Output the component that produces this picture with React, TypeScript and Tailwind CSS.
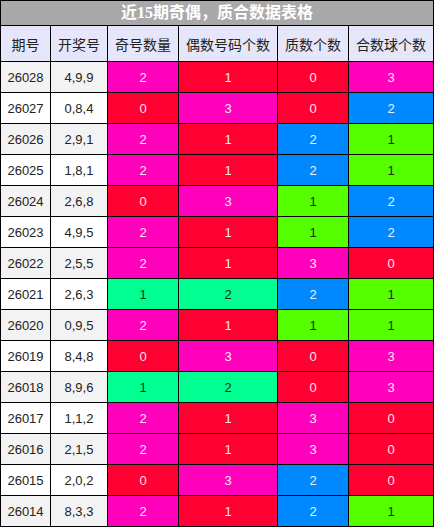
import React from "react";

type Row = [string, string, number, number, number, number];

const rows: Row[] = [
  ["26028", "4,9,9", 2, 1, 0, 3],
  ["26027", "0,8,4", 0, 3, 0, 2],
  ["26026", "2,9,1", 2, 1, 2, 1],
  ["26025", "1,8,1", 2, 1, 2, 1],
  ["26024", "2,6,8", 0, 3, 1, 2],
  ["26023", "4,9,5", 2, 1, 1, 2],
  ["26022", "2,5,5", 2, 1, 3, 0],
  ["26021", "2,6,3", 1, 2, 2, 1],
  ["26020", "0,9,5", 2, 1, 1, 1],
  ["26019", "8,4,8", 0, 3, 0, 3],
  ["26018", "8,9,6", 1, 2, 0, 3],
  ["26017", "1,1,2", 2, 1, 3, 0],
  ["26016", "2,1,5", 2, 1, 3, 0],
  ["26015", "2,0,2", 0, 3, 2, 0],
  ["26014", "8,3,3", 2, 1, 2, 1],
];

const MAG = "bg-[#ff00bb] text-[#fde8f6]";
const RED = "bg-[#ff0033] text-[#fde3e8]";
const BLUE = "bg-[#0088ff] text-[#e6f2ff]";
const GREEN = "bg-[#55ff00] text-[#1a2a10]";
const SPRING = "bg-[#00ff90] text-[#13301f]";

const oddMap: Record<number, string> = { 0: RED, 1: SPRING, 2: MAG, 3: BLUE };
const evenMap: Record<number, string> = { 0: BLUE, 1: RED, 2: SPRING, 3: MAG };
const primeMap: Record<number, string> = { 0: RED, 1: GREEN, 2: BLUE, 3: MAG };
const compMap: Record<number, string> = { 0: RED, 1: GREEN, 2: BLUE, 3: MAG };

const headers = ["期号", "开奖号", "奇号数量", "偶数号码个数", "质数个数", "合数球个数"];

const cell = "flex items-center justify-center leading-none text-[13px] font-['Liberation_Sans','Noto_Sans_CJK_SC',sans-serif]";

export default function App() {
  return (
    <div
      className="w-[434px] h-[527px] bg-white"
      style={{ fontFamily: '"Noto Sans CJK SC", "Noto Sans", sans-serif' }}
    >
      <div className="grid grid-cols-[49px_56px_70px_98px_70px_84px] grid-rows-[24px_35px_repeat(15,30px)] gap-px p-px bg-black text-[14px]">
        <div
          className="col-span-6 bg-[#a9a9a9] text-white font-bold text-[16px] flex items-center justify-center leading-none"
          style={{ fontFamily: '"Liberation Serif", "Noto Sans CJK SC", serif' }}
        >
          近15期奇偶，质合数据表格
        </div>
        {headers.map((h) => (
          <div
            key={h}
            className="bg-[#e6e6fa] text-[#222] flex items-center justify-center leading-none whitespace-nowrap"
          >
            {h}
          </div>
        ))}
        {rows.map((r, i) => {
          const base = i % 2 === 0 ? "bg-[#f3f3f3]" : "bg-white";
          return (
            <React.Fragment key={r[0]}>
              <div className={`${base} text-[#222] ${cell}`}>{r[0]}</div>
              <div className={`${base} text-[#222] ${cell}`}>{r[1]}</div>
              <div className={`${oddMap[r[2]]} ${cell}`}>{r[2]}</div>
              <div className={`${evenMap[r[3]]} ${cell}`}>{r[3]}</div>
              <div className={`${primeMap[r[4]]} ${cell}`}>{r[4]}</div>
              <div className={`${compMap[r[5]]} ${cell}`}>{r[5]}</div>
            </React.Fragment>
          );
        })}
      </div>
    </div>
  );
}
